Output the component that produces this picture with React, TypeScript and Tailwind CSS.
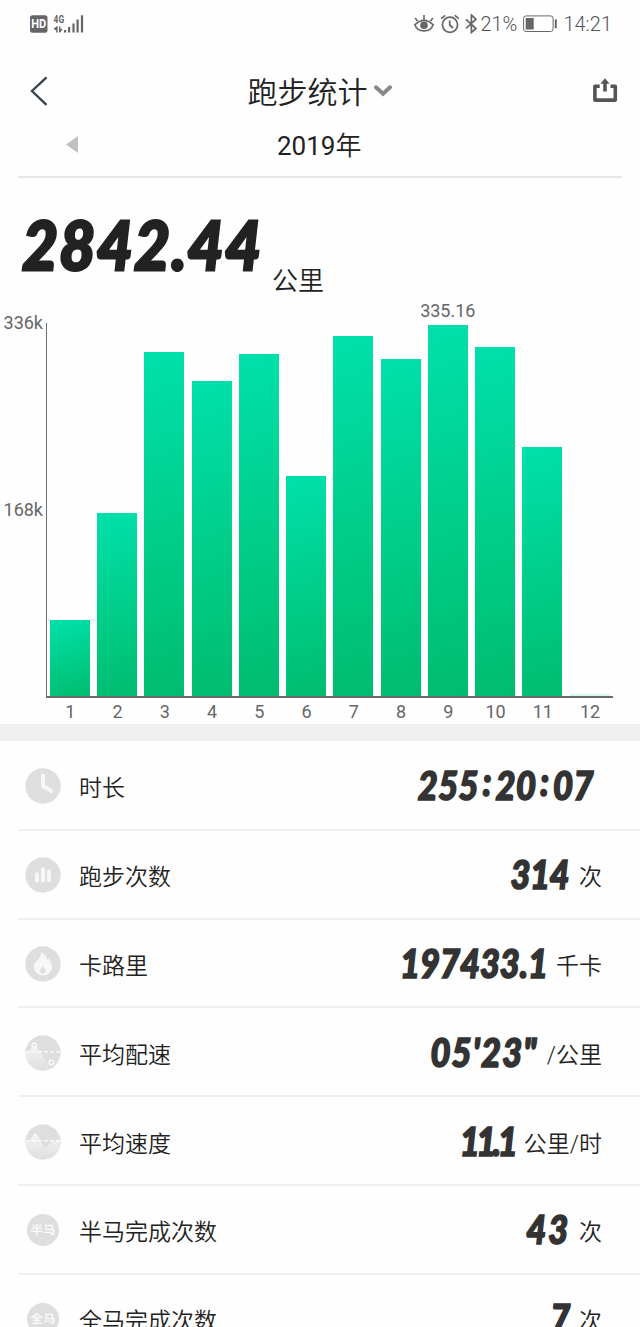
import type { ReactNode } from "react";

const months = [
  { label: "1", height: 76 },
  { label: "2", height: 183 },
  { label: "3", height: 344 },
  { label: "4", height: 315 },
  { label: "5", height: 342 },
  { label: "6", height: 220 },
  { label: "7", height: 360 },
  { label: "8", height: 337 },
  { label: "9", height: 371, value: "335.16" },
  { label: "10", height: 349 },
  { label: "11", height: 249 },
  { label: "12", height: 2 },
];

function StatusBar() {
  return (
    <div className="flex h-12 shrink-0 items-center pl-[30px] pr-[28px] text-[#666]">
      <svg width="54" height="20" viewBox="0 0 54 20" fill="currentColor">
        <rect x="0" y="1.3" width="17.5" height="17.5" rx="2.5" />
        <text x="8.8" y="14.4" textAnchor="middle" textLength="15" lengthAdjust="spacingAndGlyphs" fontSize="12" fontWeight="700" fontFamily="Roboto, sans-serif" fill="#fff">HD</text>
        <text x="23.6" y="8.6" textLength="10.5" lengthAdjust="spacingAndGlyphs" fontSize="10.5" fontWeight="700" fontFamily="Roboto, sans-serif">4G</text>
        <path d="M26.2 12.5v6h1.5v-6l-1-.3L24 14.5v1.3h2.2zM29 12.5v6h1.1l2-2.4v-1.2h-1.6v-2.4zM34 16h2.2v2.5H34zM38 13h2.2v5.5H38zM42.4 9.5h2.2v9h-2.2zM46.5 5.5h2.2v13h-2.2zM50.9 1.2h2.2v17.3h-2.2z" />
      </svg>
      <div className="ml-auto flex items-center">
        <svg width="20" height="20" viewBox="0 0 20 20" fill="none" stroke="currentColor" strokeWidth="1.6">
          <path d="M.8 10.8Q10 1.8 19.2 10.8Q17 16.9 10 16.9T.8 10.8Z" />
          <circle cx="10" cy="11.3" r="3.8" fill="currentColor" stroke="none" />
          <path d="M10 1v5M1.2 4l2.3 3.2M18.8 4l-2.3 3.2" />
        </svg>
        <svg className="ml-[6px]" width="20" height="20" viewBox="0 0 20 20" fill="none" stroke="currentColor" strokeWidth="1.7">
          <circle cx="10" cy="10.8" r="7.6" />
          <path d="M9.7 6.5v4.5l3.3 3M1.2 4.6l4-3.3M14.8 1.3l4 3.3" />
        </svg>
        <svg className="ml-[5px]" width="13" height="20" viewBox="0 0 13 20" fill="none" stroke="currentColor" strokeWidth="1.7">
          <path d="M1 5.3l10 9.2-4.6 4V1l4.6 4.2-10 9.3" />
        </svg>
        <span className="ml-[2px] w-[38px] whitespace-nowrap text-[20px] leading-none font-[350] text-[#555]">21%</span>
        <svg className="ml-[5px]" width="35" height="18" viewBox="0 0 35 18" fill="currentColor">
          <rect x=".6" y=".9" width="29.5" height="15.6" rx="2.5" fill="none" stroke="currentColor" />
          <path d="M2.7 3h8v11.5h-8zM31.8 4.6h2v8.6h-2z" />
        </svg>
        <span className="ml-[5px] text-[20px] leading-none font-[350] text-[#555]">14:21</span>
      </div>
    </div>
  );
}

function Header() {
  return (
    <header className="shrink-0">
      <div className="flex h-[86px] items-center justify-between pl-[30px] pr-[22px]">
        <svg width="18" height="30" viewBox="0 0 18 30" fill="none" stroke="#3c4650" strokeWidth="2.4">
          <path d="M16.5 1.3L2 15l14.5 13.8" />
        </svg>
        <div className="-ml-[1px] flex items-center text-[30px] leading-none font-[350]">
          <span className="mt-[3px]">跑步统计</span>
          <svg className="ml-[6px]" width="18" height="12" viewBox="0 0 18 12" fill="none" stroke="#888" strokeWidth="4">
            <path d="M2 2.3L9 8.8l7-6.5" strokeLinecap="round" />
          </svg>
        </div>
        <svg width="26" height="26" viewBox="0 0 26 26" fill="none" stroke="#555" strokeWidth="3.6">
          <path d="M7.7 8.2H2.9v13.9h20.4V8.2h-4.8" strokeLinejoin="round" />
          <path d="M13 13.5V5" />
          <path d="M13 .2l4.6 5.6H8.4z" fill="#555" stroke="none" />
        </svg>
      </div>
      <div className="mx-[18px] flex h-[44px] items-start border-b-2 border-[#e6e6e6] pl-[48px]">
        <svg className="mt-[2px]" width="12" height="17" viewBox="0 0 12 17" fill="#c0c0c0">
          <path d="M12 0v17L0 8.5z" />
        </svg>
        <span className="-mt-[2px] ml-[199px] text-[26px] leading-[28px]">
          2019<span className="font-[350]">年</span>
        </span>
      </div>
    </header>
  );
}

function Chart() {
  return (
    <section className="flex h-[428px] shrink-0">
      <div className="flex w-[46px] shrink-0 flex-col items-end pr-[3px] pt-[17px] text-[18px] leading-[20px] text-[#666]">
        <span>336k</span>
        <span className="mt-[167px]">168k</span>
      </div>
      <div className="w-[567px] pt-[27px]">
        <div className="flex h-[375px] items-end gap-[7.25px] border-b-2 border-l border-[#6b6b6b] pl-[2.8px]">
          {months.map((m) => (
            <div key={m.label} className="relative w-10 shrink-0">
              {m.value && (
                <span className="absolute -top-[24px] left-1/2 -translate-x-1/2 text-[18px] leading-[20px] text-[#666]">
                  {m.value}
                </span>
              )}
              <div
                className={m.height > 2 ? "bg-[linear-gradient(165deg,#00e0ac_0%,#00cf8b_50%,#00bc70_100%)]" : "bg-[#d5f7ec]"}
                style={{ height: m.height }}
              />
            </div>
          ))}
        </div>
        <div className="flex gap-[7.25px] pl-[4.3px] pt-[4px] text-[18px] leading-[20px] text-[#666]">
          {months.map((m) => (
            <span key={m.label} className="w-10 shrink-0 text-center">{m.label}</span>
          ))}
        </div>
      </div>
    </section>
  );
}

function Disc({ children, r = 17.7 }: { children: ReactNode; r?: number }) {
  return (
    <svg width="36" height="36" viewBox="0 0 36 36" fill="none">
      <circle cx="18" cy="18" r={r} fill="#dededf" />
      {children}
    </svg>
  );
}

function DiscLabel({ text }: { text: string }) {
  return (
    <Disc r={16}>
      <text x="18" y="22" textAnchor="middle" textLength="25" lengthAdjust="spacingAndGlyphs" fontSize="11" fontWeight="700" fontFamily="'Noto Sans CJK SC', sans-serif" fill="#fafafa">
        {text}
      </text>
    </Disc>
  );
}

const clock = (
  <Disc>
    <path d="M18 7.5v10.5l8.3 4.9" stroke="#f7f7f7" strokeWidth="4" strokeLinecap="round" strokeLinejoin="round" />
  </Disc>
);

const bars = (
  <Disc>
    <path d="M12 17.2v6.2M18 12v11.4M24 14.5v8.9" stroke="#f7f7f7" strokeWidth="4" strokeLinecap="round" />
  </Disc>
);

const flame = (
  <Disc>
    <path d="M16 6.3c4.5 2.2 6.2 4.7 6 7.9l1.7-2c2 3.2 3.2 6 3.2 8.6 0 5-4 8.6-9 8.6s-9-3.4-9-8.4c0-3.4 1.7-5 4-7.2 2.3-2.3 3.1-4.2 3.1-7.5z" fill="#f7f7f7" />
    <path d="M17.8 20.5c2 1.8 2.8 3 2.8 4.4 0 1.7-1.2 2.7-2.8 2.7S15 26.6 15 24.9c0-1.5.9-2.6 2.8-4.4z" fill="#dedede" />
  </Disc>
);

function Wave({ id, d, dots }: { id: string; d: string; dots?: boolean }) {
  return (
    <Disc>
      <defs>
        <linearGradient id={id} x1="0" y1="6" x2="0" y2="34" gradientUnits="userSpaceOnUse">
          <stop stopColor="#fff" stopOpacity=".8" />
          <stop offset="1" stopColor="#fff" stopOpacity=".05" />
        </linearGradient>
        <clipPath id={`${id}-clip`}>
          <circle cx="18" cy="18" r="17.7" />
        </clipPath>
      </defs>
      <path d={d} fill={`url(#${id})`} clipPath={`url(#${id}-clip)`} />
      <path d="M1 16.7h34" stroke="#fafafa" strokeWidth="1.5" strokeDasharray="4 2" />
      {dots && (
        <g stroke="#fafafa" strokeWidth="1.3" fill="#dedede">
          <circle cx="9" cy="10" r="2" />
          <circle cx="26.3" cy="27.3" r="2.3" />
        </g>
      )}
    </Disc>
  );
}

const colon = <span className="relative -top-[4px] mx-[4px]">:</span>;

const rows = [
  { icon: clock, label: "时长", value: <>255{colon}20{colon}07</>, unit: "", size: "mr-[8px] tracking-[0.6px]" },
  { icon: bars, label: "跑步次数", value: "314", unit: "次", size: "mr-[10px] tracking-[-0.5px]" },
  { icon: flame, label: "卡路里", value: "197433.1", unit: "千卡", size: "mr-[8px] tracking-[0px]" },
  { icon: <Wave id="pace" d="M0 17Q5 16 7 12Q9 8 12 12L22 28Q27 34 35 22V36H0z" dots />, label: "平均配速", value: "05'23\"", unit: "/公里", size: "mr-[9px] tracking-[1.4px]" },
  { icon: <Wave id="speed" d="M0 18Q4 18 7 13Q10 6 13 12Q18 25 22 23Q27 16 35 16V36H0z" />, label: "平均速度", value: "11.1", unit: "公里/时", size: "mr-[10px] tracking-[-4px]" },
  { icon: <DiscLabel text="半马" />, label: "半马完成次数", value: "43", unit: "次", size: "mr-[9px] tracking-[2.5px]" },
  { icon: <DiscLabel text="全马" />, label: "全马完成次数", value: "7", unit: "次", size: "mr-[9px]" },
];

function StatList() {
  return (
    <ul className="shrink-0 pl-[18px] pt-px">
      {rows.map((row) => (
        <li key={row.label} className="flex h-[88.8px] items-center border-b-2 border-[#f0f0f0] pl-[7px] pr-[38px] text-[23px] leading-none font-[350]">
          <span className="mt-[2px]">{row.icon}</span>
          <span className="ml-[18px] mt-[7px]">{row.label}</span>
          <span className={`ml-auto origin-right scale-x-[0.86] whitespace-nowrap font-[Lato] text-[40px] leading-none font-black italic text-[#333] [-webkit-text-stroke:1.7px_#333] ${row.size}`}>
            {row.value}
          </span>
          <span className="mt-[7px]">{row.unit}</span>
        </li>
      ))}
    </ul>
  );
}

export default function App() {
  return (
    <main className="flex h-[1327px] w-[640px] flex-col overflow-hidden bg-[#fefefe] font-[Roboto,'Noto_Sans_CJK_SC',sans-serif] text-[#222]">
      <StatusBar />
      <Header />
      <div className="flex h-[118px] shrink-0 items-start pl-[22px]">
        <span className="mt-[32px] w-[238px] origin-left scale-x-[0.93] font-[Lato] text-[67px] leading-[68px] tracking-[1.3px] font-black italic [-webkit-text-stroke:2.8px_#222]">2842.44</span>
        <span className="ml-[12px] mt-[90px] text-[26px] leading-none font-[350]">公里</span>
      </div>
      <Chart />
      <div className="h-[17px] shrink-0 bg-[#f0f0f0]" />
      <StatList />
    </main>
  );
}
